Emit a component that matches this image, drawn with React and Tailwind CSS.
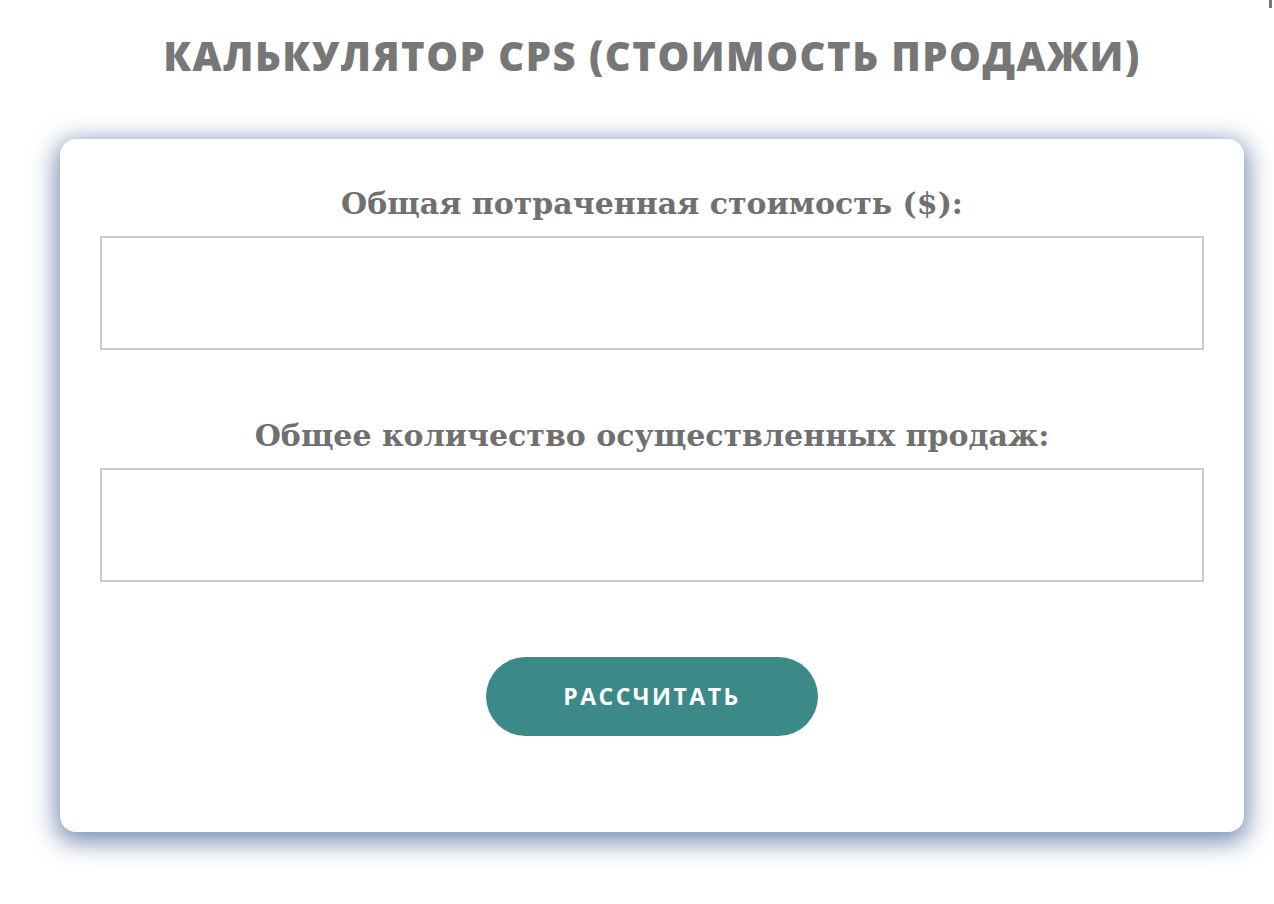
import React, { useState } from 'react';

const Field = ({ label, value, onChange }) => (
  <div className="flex flex-col items-center">
    <label
      className="text-[30px] font-bold leading-[44px] text-[#707070] mb-[10px]"
      style={{ fontFamily: '"DejaVu Serif", "Liberation Serif", serif' }}
    >
      {label}
    </label>
    <input
      type="number"
      value={value}
      onChange={onChange}
      className="w-full h-[114px] border-2 border-[#cccccc] bg-white px-4 text-2xl outline-none"
    />
  </div>
);

export default function App() {
  const [cost, setCost] = useState('');
  const [sales, setSales] = useState('');

  return (
    <div className="relative min-h-[904px] bg-white" style={{ fontFamily: '"Open Sans", "Liberation Sans", sans-serif' }}>
      <div className="absolute right-[2px] top-0 h-[8px] w-[3px] bg-[#777]" />
      <div className="ml-[60px] mr-[30px]">
        <h1 className="pt-[28px] text-center text-[40px] font-extrabold leading-[56px] tracking-[1.5px] text-[#777777]">
          КАЛЬКУЛЯТОР CPS (СТОИМОСТЬ ПРОДАЖИ)
        </h1>
        <div className="mt-[55px] rounded-[16px] bg-white px-[40px] pt-[43px] pb-[96px] shadow-[0_6px_24px_4px_rgba(105,130,168,0.9)]">
          <Field label="Общая потраченная стоимость ($):" value={cost} onChange={e => setCost(e.target.value)} />
          <div className="mt-[64px]">
            <Field label="Общее количество осуществленных продаж:" value={sales} onChange={e => setSales(e.target.value)} />
          </div>
          <div className="mt-[75px] flex justify-center">
            <button className="h-[79px] w-[332px] rounded-full bg-[#3b8a88] text-[23px] font-bold tracking-[2.5px] text-white">
              РАССЧИТАТЬ
            </button>
          </div>
        </div>
      </div>
    </div>
  );
}
